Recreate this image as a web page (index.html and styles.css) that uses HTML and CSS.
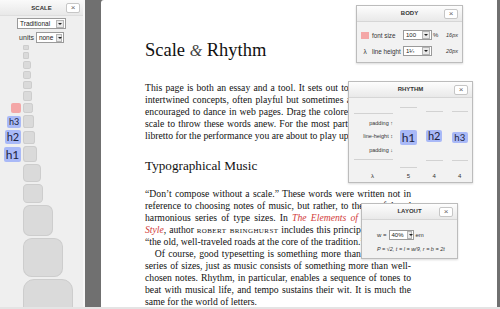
FILE: index.html
```html
<!DOCTYPE html>
<html lang="en">
<head>
    <meta charset="UTF-8">
    <title>Scale &amp; Rhythm</title>
    <link rel="stylesheet" href="styles.css">
</head>
<body>
    <div class="app">
        <aside class="dock">
            <div class="dock-head">SCALE <span class="close">&times;</span></div>
            <div class="dock-controls">
                <div class="select wide"><span>Traditional</span><i></i></div>
                <div class="units">units <div class="select"><span>none</span><i></i></div></div>
            </div>
            <div class="scale">
                <div class="step"><span class="tag"></span><span class="box" style="width:6px;height:5px"></span></div>
                <div class="step"><span class="tag"></span><span class="box" style="width:6px;height:7px"></span></div>
                <div class="step"><span class="tag"></span><span class="box" style="width:8px;height:8px"></span></div>
                <div class="step"><span class="tag"></span><span class="box" style="width:8px;height:8px"></span></div>
                <div class="step"><span class="tag"></span><span class="box" style="width:9px;height:8px"></span></div>
                <div class="step"><span class="tag"></span><span class="box" style="width:9px;height:10px"></span></div>
                <div class="step"><span class="tag"><b class="chip body-chip"></b></span><span class="box" style="width:10px;height:10px"></span></div>
                <div class="step"><span class="tag"><b class="chip h3">h3</b></span><span class="box" style="width:11px;height:13px"></span></div>
                <div class="step"><span class="tag"><b class="chip h2">h2</b></span><span class="box" style="width:12px;height:13px"></span></div>
                <div class="step"><span class="tag"><b class="chip h1">h1</b></span><span class="box" style="width:14px;height:16px"></span></div>
                <div class="step"><span class="tag"></span><span class="box" style="width:18px;height:18px"></span></div>
                <div class="step"><span class="tag"></span><span class="box" style="width:20px;height:19px"></span></div>
                <div class="step"><span class="tag"></span><span class="box" style="width:30px;height:31px"></span></div>
                <div class="step"><span class="tag"></span><span class="box" style="width:40px;height:39px"></span></div>
                <div class="step"><span class="tag"></span><span class="box" style="width:50px;height:50px"></span></div>
            </div>
        </aside>
        <div class="gutter"></div>
        <main class="page">
            <article class="essay">
                <h1>Scale <em class="amp">&amp;</em> Rhythm</h1>
                <p>This page is both an essay and a tool. It sets out to explain several intertwined concepts, often playful but sometimes at odds, that are encouraged to dance in web pages. Drag the colored tags along the scale to throw these words anew. For the most part, consider this a libretto for the performance you are about to play upon it.</p>

                <h2>Typographical Music</h2>
                <p>&ldquo;Don&rsquo;t compose without a scale.&rdquo; These words were written not in reference to choosing notes of music, but rather, to the careful and harmonious series of type sizes. In <em class="title">The Elements of Typographic Style</em>, author <span class="sc">Robert Bringhurst</span> includes this principle in a list of &ldquo;the old, well-traveled roads at the core of the tradition.&rdquo;</p>
                <p class="indent">Of course, good typesetting is something more than a handsome series of sizes, just as music consists of something more than well-chosen notes. Rhythm, in particular, enables a sequence of tones to beat with musical life, and tempo sustains their wit. It is much the same for the world of letters.</p>
            </article>
        </main>
    </div>

    <div class="panel body-panel">
        <div class="panel-head">BODY <span class="close">&times;</span></div>
        <div class="panel-body">
            <div class="row"><b class="swatch"></b><span class="lbl">font size</span><div class="select"><span>100</span><i></i></div><span class="unit">%</span><em class="px">16px</em></div>
            <div class="row"><span class="lambda">&lambda;</span><span class="lbl">line height</span><div class="select"><span>1&frac14;</span><i></i></div><span class="unit"></span><em class="px">20px</em></div>
        </div>
    </div>

    <div class="panel rhythm-panel">
        <div class="panel-head">RHYTHM <span class="close">&times;</span></div>
        <div class="rhythm">
            <div class="rcol legend">
                <div class="span">
                    <span>padding &uarr;</span>
                    <span>line-height &#8597;</span>
                    <span>padding &darr;</span>
                </div>
                <div class="foot">&lambda;</div>
            </div>
            <div class="rcol col-h1">
                <div class="span"><b class="chip r1">h1</b></div>
                <div class="foot">5</div>
            </div>
            <div class="rcol col-h2">
                <div class="span"><b class="chip r2">h2</b></div>
                <div class="foot">4</div>
            </div>
            <div class="rcol col-h3">
                <div class="span"><b class="chip r3">h3</b></div>
                <div class="foot">4</div>
            </div>
        </div>
    </div>

    <div class="panel layout-panel">
        <div class="panel-head">LAYOUT <span class="close">&times;</span></div>
        <div class="panel-body">
            <div class="row">w = <div class="select"><span>40%</span><i></i></div> em</div>
            <div class="formula">P = &radic;2, t = l = w/9, r = b = 2t</div>
        </div>
    </div>
</body>
</html>
```

FILE: styles.css
```css
body { margin: 0; background: #e4e4e4; font-family: "Liberation Sans", Arial, sans-serif; }
.app { display: flex; height: 307px; background: #707070; overflow: hidden; }

/* scale dock */
.dock { width: 83px; background: #efefef; border-right: 2px solid #f7f7f7; overflow: hidden; }
.dock-head { position: relative; height: 15px; line-height: 16px; text-align: center; font-size: 6px; font-weight: bold; color: #333; background: linear-gradient(#fafafa, #e8e8e8); border-bottom: 1px solid #dedede; }
.dock-head .close { top: 3px; right: 3px; }
.close { position: absolute; top: 3px; right: 4px; width: 12px; height: 8px; line-height: 8px; font-size: 8px; font-weight: normal; color: #666; background: #fff; border: 1px solid #c6c6c6; border-radius: 2px; text-align: center; }
.dock-controls { display: flex; flex-direction: column; align-items: center; gap: 3px; padding-top: 2px; font-size: 7px; color: #333; }
.units { display: flex; align-items: center; gap: 2px; }
.select { display: inline-flex; align-items: center; height: 10px; background: #fff; border: 1px solid #9a9a9a; font-size: 6.5px; color: #222; box-sizing: border-box; }
.select span { padding: 0 3px 0 2px; flex: 1; white-space: nowrap; }
.select i { width: 6px; height: 6px; margin-right: 1px; background: #e8e8e8; border: 1px solid #b4b4b4; position: relative; }
.select i:after { content: ""; position: absolute; left: 1px; top: 2px; border: 2px solid transparent; border-top-color: #222; border-bottom: 0; }
.dock .select.wide { width: 49px; height: 11px; }
.dock .units .select { width: 28px; height: 11px; }

.scale { padding-top: 2px; }
.step { display: flex; align-items: center; gap: 2px; margin-bottom: 2px; }
.tag { width: 21px; display: flex; justify-content: flex-end; }
.box { display: block; background: #dadada; border: 1px solid #cdcdcd; border-radius: 22%; box-sizing: border-box; }

.chip { display: block; background: #a9b9f7; color: #1c2340; border-radius: 2px; font-family: Lato, "Open Sans", sans-serif; font-weight: normal; text-align: center; }
.chip.h3 { width: 14px; height: 12px; line-height: 12px; font-size: 9px; }
.chip.h2 { width: 16px; height: 14px; line-height: 14px; font-size: 11px; }
.chip.h1 { width: 17px; height: 15px; line-height: 15px; font-size: 12px; }
.chip.body-chip { width: 10px; height: 10px; background: #f4a7a7; }

.gutter { width: 16px; flex: none; }

/* page */
.page { flex: 1; background: #fff; margin-right: 3px; border-top-left-radius: 3px; }
.essay { width: 266px; padding: 40px 0 0 44px; font-family: "Liberation Serif", "Times New Roman", serif; font-size: 9.7px; line-height: 12px; color: #111; }
.essay h1 { margin: 0 0 21px; font-size: 18.5px; font-weight: normal; line-height: 20px; }
.essay .amp { font-size: 16px; color: #444; }
.essay h2 { margin: 16px 0 14px; font-size: 13.2px; font-weight: normal; line-height: 16px; }
.essay p { margin: 0; text-align: justify; }
.essay p.indent { text-indent: 1em; }
.essay .title { color: #d2403c; }
.essay .sc { font-variant: small-caps; text-transform: lowercase; letter-spacing: 0.4px; }

/* floating panels */
.panel { position: absolute; background: #f2f2f2; border: 1px solid #bcbcbc; box-shadow: 0 1px 2px rgba(0,0,0,0.15); font-size: 6px; color: #333; box-sizing: border-box; }
.panel-head { position: relative; height: 15px; line-height: 15px; text-align: center; font-size: 6px; font-weight: bold; background: linear-gradient(#fdfdfd, #e9e9e9); border-bottom: 1px solid #d6d6d6; }
.panel-body { padding: 8px 4px 0; display: flex; flex-direction: column; gap: 6px; }
.panel .row { display: flex; align-items: center; gap: 3px; white-space: nowrap; }
.panel .select { width: 29px; font-size: 6px; }
.panel .px { font-size: 5.5px; margin-left: auto; }

.body-panel { left: 356px; top: 5px; width: 107px; height: 58px; }
.body-panel .lbl { width: 28px; font-size: 6.3px; }
.body-panel .swatch { width: 8px; height: 7px; background: #f4a7a7; flex: none; }
.body-panel .lambda { width: 8px; text-align: center; font-size: 6.5px; }
.body-panel .unit { width: 4px; margin-left: -2px; }

.rhythm-panel { left: 348px; top: 81px; width: 125px; height: 102px; }
.rhythm { display: flex; padding: 0 4px 0 5px; gap: 9px; height: 86px; }
.rcol { width: 17px; display: flex; flex-direction: column; align-items: center; }
.rcol.legend { width: 37px; }
.rcol .span { border-top: 1px solid #d2d2d2; border-bottom: 1px solid #d2d2d2; width: 100%; display: flex; flex-direction: column; justify-content: center; align-items: center; box-sizing: border-box; }
.legend .span { margin-top: 15px; height: 47px; align-items: flex-end; justify-content: space-around; font-size: 5.5px; padding: 2px 0; margin-right: -2px; width: 39px; }
.col-h1 .span { margin-top: 9px; height: 61px; }
.col-h2 .span, .col-h3 .span { margin-top: 13px; height: 50px; }
.rcol .foot { margin-top: auto; height: 14px; line-height: 12px; font-size: 6px; }
.chip.r1 { width: 17px; height: 15px; line-height: 15px; font-size: 12px; }
.chip.r2 { width: 16px; height: 12px; line-height: 12px; font-size: 11px; }
.chip.r3 { width: 16px; height: 11px; line-height: 11px; font-size: 9.5px; margin-top: 2px; }

.layout-panel { left: 361px; top: 203px; width: 97px; height: 56px; }
.layout-panel .panel-body { padding: 10px 15px 0; gap: 6px; }
.layout-panel .row { gap: 2px; }
.layout-panel .select { width: 25px; }
.layout-panel .formula { font-style: italic; font-size: 5.5px; white-space: nowrap; }
```
